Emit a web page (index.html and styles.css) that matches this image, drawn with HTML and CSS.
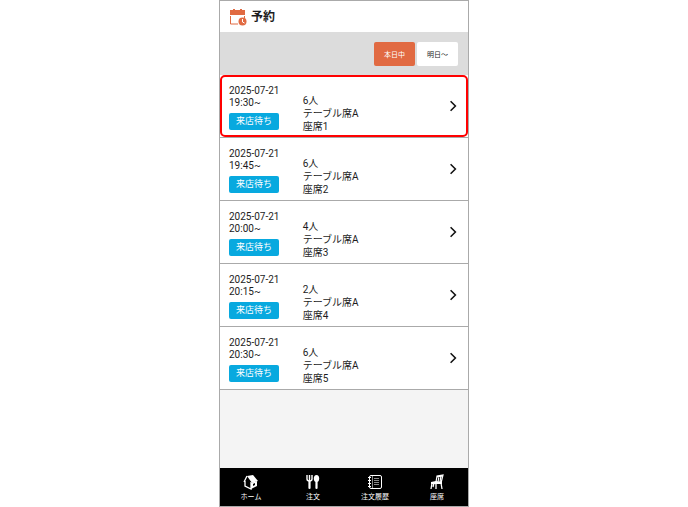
FILE: index.html
```html
<!DOCTYPE html>
<html lang="ja">
<head>
  <meta charset="UTF-8" />
  <meta name="viewport" content="width=device-width, initial-scale=1.0"/>
  <title>予約</title>
  <link rel="stylesheet" href="styles.css">
</head>
<body>
  <div class="app">
    <header class="header">
      <svg class="header-icon" viewBox="0 0 18 18" aria-hidden="true">
        <path d="M1 2h3V1h2v1h5V1h2v1h3v5H1z" fill="#e16a42"/>
        <path d="M1.500 8v8H9M15.500 8v2" fill="none" stroke="#e16a42"/>
        <circle cx="13.500" cy="13.500" r="4" fill="#e16a42"/>
        <path d="M13.500 11v3l2 1" fill="none" stroke="#fff"/>
      </svg>
      <h1>予約</h1>
    </header>

    <div class="toolbar">
      <button class="tab active" type="button">本日中</button>
      <button class="tab" type="button">明日～</button>
    </div>

    <main class="list">
      <a class="row selected" href="#seat1">
        <div class="when">
          <div>2025-07-21</div>
          <div>19:30~</div>
          <span class="status">来店待ち</span>
        </div>
        <div class="seat">
          <div>6人</div>
          <div>テーブル席A</div>
          <div>座席1</div>
        </div>
        <svg class="arrow" viewBox="0 0 8 10" aria-hidden="true"><path d="M2 1l4 4-4 4"/></svg>
      </a>
      <a class="row" href="#seat2">
        <div class="when">
          <div>2025-07-21</div>
          <div>19:45~</div>
          <span class="status">来店待ち</span>
        </div>
        <div class="seat">
          <div>6人</div>
          <div>テーブル席A</div>
          <div>座席2</div>
        </div>
        <svg class="arrow" viewBox="0 0 8 10" aria-hidden="true"><path d="M2 1l4 4-4 4"/></svg>
      </a>
      <a class="row" href="#seat3">
        <div class="when">
          <div>2025-07-21</div>
          <div>20:00~</div>
          <span class="status">来店待ち</span>
        </div>
        <div class="seat">
          <div>4人</div>
          <div>テーブル席A</div>
          <div>座席3</div>
        </div>
        <svg class="arrow" viewBox="0 0 8 10" aria-hidden="true"><path d="M2 1l4 4-4 4"/></svg>
      </a>
      <a class="row" href="#seat4">
        <div class="when">
          <div>2025-07-21</div>
          <div>20:15~</div>
          <span class="status">来店待ち</span>
        </div>
        <div class="seat">
          <div>2人</div>
          <div>テーブル席A</div>
          <div>座席4</div>
        </div>
        <svg class="arrow" viewBox="0 0 8 10" aria-hidden="true"><path d="M2 1l4 4-4 4"/></svg>
      </a>
      <a class="row" href="#seat5">
        <div class="when">
          <div>2025-07-21</div>
          <div>20:30~</div>
          <span class="status">来店待ち</span>
        </div>
        <div class="seat">
          <div>6人</div>
          <div>テーブル席A</div>
          <div>座席5</div>
        </div>
        <svg class="arrow" viewBox="0 0 8 10" aria-hidden="true"><path d="M2 1l4 4-4 4"/></svg>
      </a>
    </main>

    <nav class="nav">
      <a href="#home">
        <svg viewBox="0 0 16 16" aria-hidden="true">
          <path d="M4 2l6-1 5 6-6 2z" fill="#fff"/>
          <path d="M4 2L1 8M2 7v5l6 3V8" fill="none" stroke="#fff" stroke-width="1.300"/>
          <path d="M8 9l6-2v5l-6 3z" fill="#fff"/>
          <path d="M10 10l2-1v2l-2 1z" fill="#000"/>
        </svg>
        ホーム
      </a>
      <a href="#order">
        <svg viewBox="0 0 16 16" aria-hidden="true">
          <path d="M2 1v4q0 2 2.500 2T7 5V1M4.500 1v5" fill="none" stroke="#fff" stroke-width="1.400"/>
          <path d="M4.500 7v7M11.500 7v7" stroke="#fff" stroke-width="2.200" stroke-linecap="round"/>
          <ellipse cx="11.500" cy="4.500" rx="2.700" ry="3.500" fill="#fff"/>
        </svg>
        注文
      </a>
      <a href="#history">
        <svg viewBox="0 0 16 16" aria-hidden="true">
          <rect x="2.500" y="1.500" width="12" height="13" rx="1.500" fill="none" stroke="#fff"/>
          <path d="M5.500 2v12" stroke="#888"/>
          <path d="M1 3.500h3M1 6.500h3M1 9.500h3M1 12.500h3" stroke="#fff"/>
          <path d="M7 4.500h5M7 6.500h5M7 8.500h5M7 10.500h5" stroke="#888"/>
        </svg>
        注文履歴
      </a>
      <a href="#seats">
        <svg viewBox="0 0 16 16" aria-hidden="true">
          <path d="M7 8l1-6 6-1-2 8M10 2L9 8M12 1.500L11 8M8 3l5-1" fill="none" stroke="#fff" stroke-width="1.200"/>
          <path d="M2 8l5-1 6 1v2H2z" fill="#fff"/>
          <path d="M3 9l-1 6M7 9v6M12 9l1 6M5 9l-1 4" fill="none" stroke="#fff" stroke-width="1.300"/>
        </svg>
        座席
      </a>
    </nav>
  </div>
</body>
</html>
```
FILE: styles.css
```css
* {
  box-sizing: border-box;
}

body {
  margin: 0;
  background-color: #fff;
  color: #1c1c1c;
  font-family: Roboto, "Noto Sans CJK JP", sans-serif;
  font-size: 10px;
}

.app {
  display: flex;
  flex-direction: column;
  width: 100%;
  max-width: 250px;
  min-height: 100vh;
  margin: 0 auto;
  border: 1px solid #aaa;
  background-color: #f4f4f4;
}

.header {
  display: flex;
  align-items: center;
  gap: 4px;
  height: 31px;
  padding: 0 9px;
  background-color: #fff;
}

.header-icon {
  width: 18px;
  height: 18px;
}

h1 {
  margin: 0;
  font-size: 12px;
  font-weight: bold;
  line-height: 16px;
}

.toolbar {
  display: flex;
  justify-content: flex-end;
  align-items: center;
  gap: 2px;
  height: 43px;
  padding: 0 10px;
  background-color: #dcdcdc;
}

.tab {
  width: 41px;
  height: 24px;
  padding: 0;
  border: none;
  border-radius: 2px;
  background-color: #fff;
  color: #1c1c1c;
  font-family: inherit;
  font-size: 7px;
  cursor: pointer;
}

.tab.active {
  background-color: #e16a42;
  color: #fff;
}

.list {
  flex: 1;
}

.row {
  position: relative;
  display: flex;
  align-items: flex-start;
  padding: 10px 10px 4px 9px;
  border-bottom: 1px solid #aaa;
  background-color: #fff;
  color: inherit;
  text-decoration: none;
}

.row.selected::after {
  content: "";
  position: absolute;
  inset: 0;
  border: 2px solid #f00;
  border-radius: 5px;
}

.when {
  width: 30%;
  margin-right: 5px;
  line-height: 12px;
}

.status {
  display: block;
  width: 50px;
  margin-top: 4px;
  border-radius: 2px;
  background-color: #08a9df;
  color: #fff;
  font-size: 9px;
  line-height: 17px;
  text-align: center;
}

.seat {
  flex: 1;
  padding-top: 9px;
  line-height: 13px;
}

.arrow {
  align-self: center;
  width: 10px;
  height: 12px;
  margin-bottom: 6px;
}

.arrow path {
  fill: none;
  stroke: #111;
  stroke-width: 1.3;
}

.nav {
  display: flex;
  height: 38px;
  background-color: #000;
}

.nav a {
  flex: 1;
  display: flex;
  flex-direction: column;
  align-items: center;
  padding-top: 6px;
  color: #fff;
  font-size: 7px;
  line-height: 14px;
  text-decoration: none;
}

.nav svg {
  width: 16px;
  height: 16px;
}
```
